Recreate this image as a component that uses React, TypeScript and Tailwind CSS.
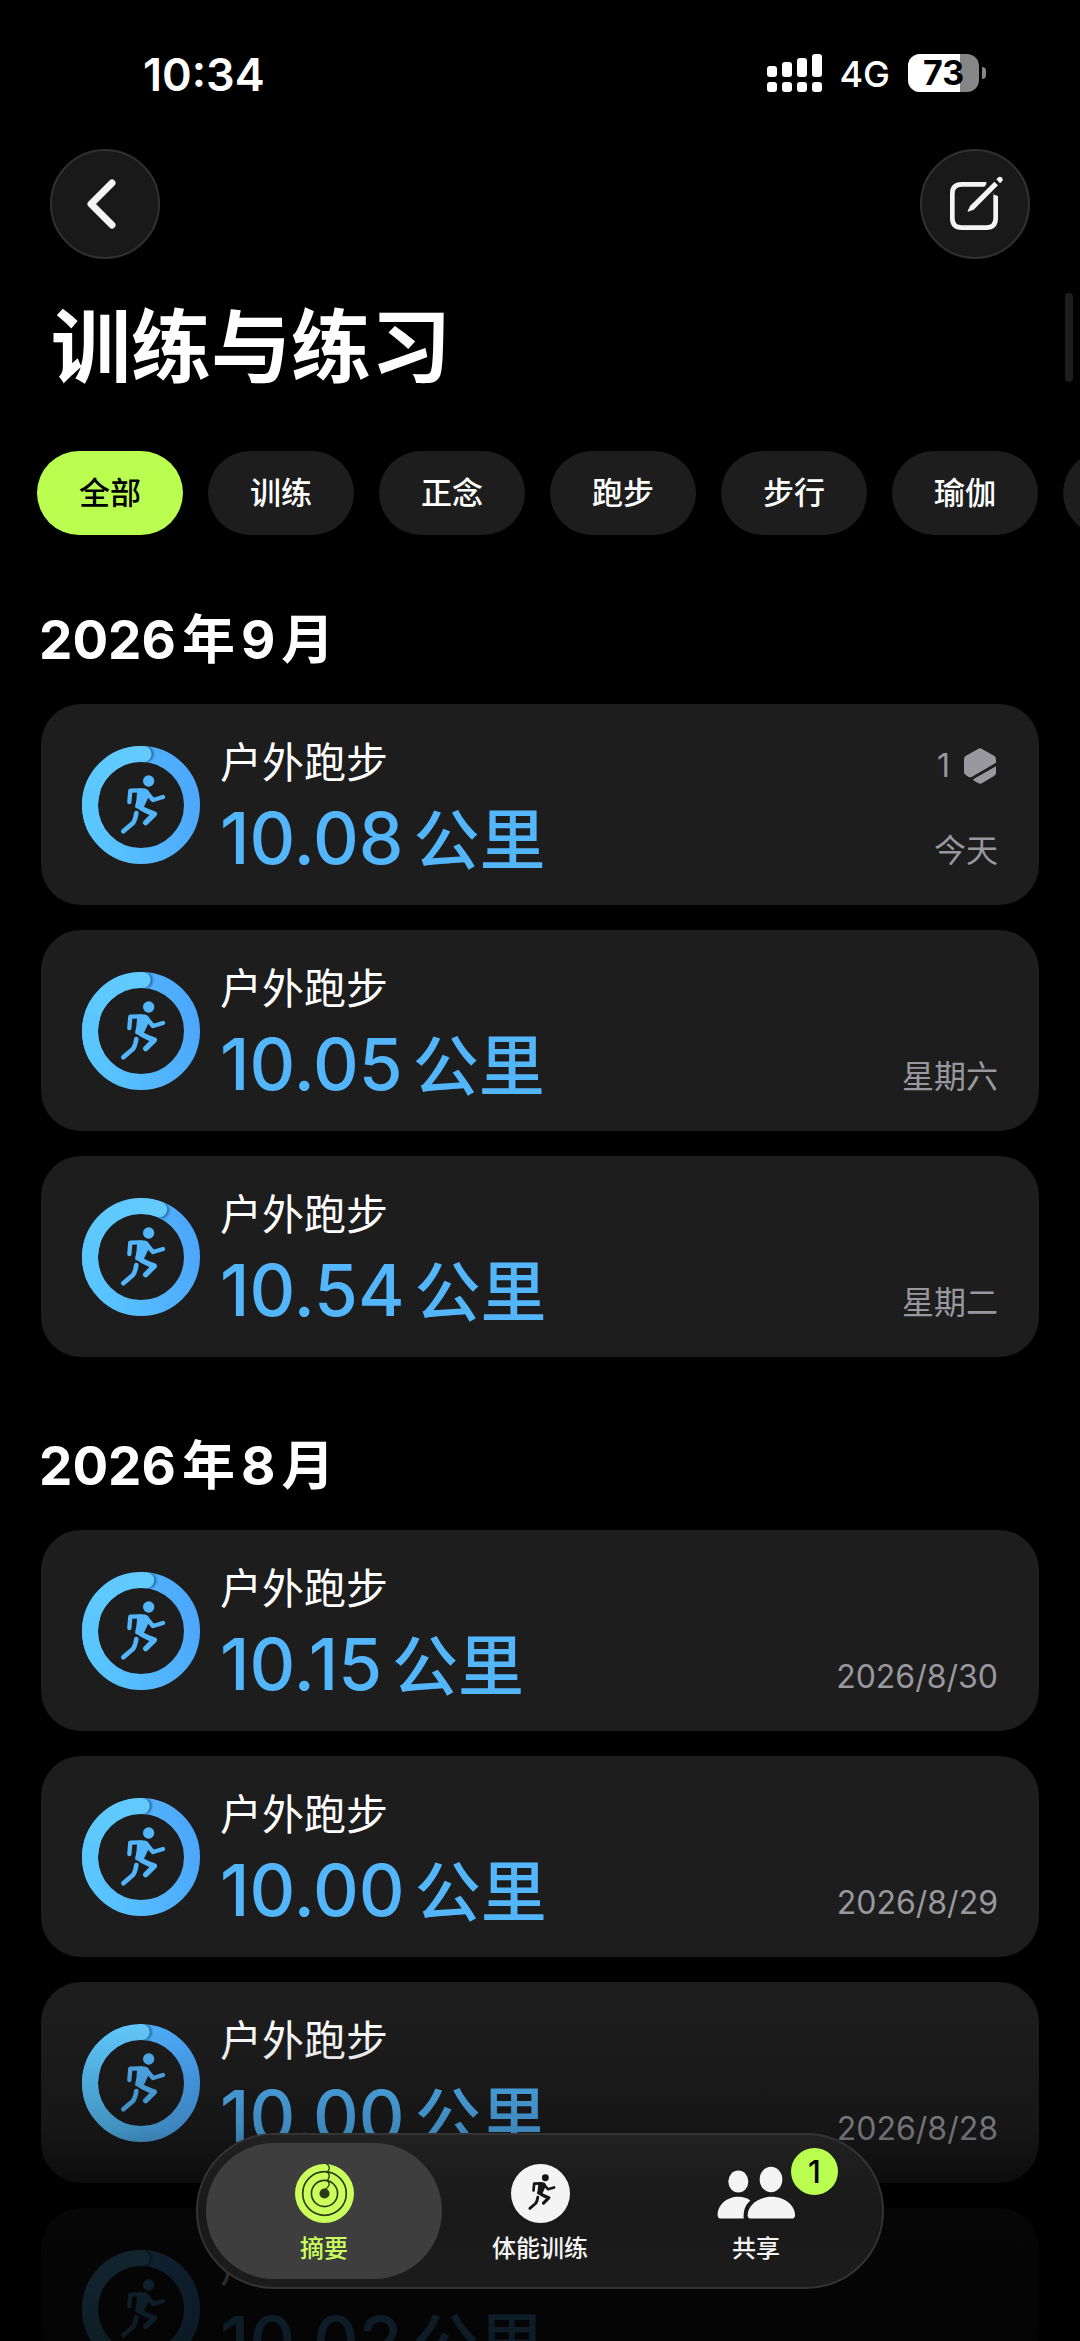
import { useState } from 'react';

type Workout = {
  id: number;
  distance: string;
  date: string;
  lap: number; // degrees past a full circle
  awards?: number;
};

const filters = ['全部', '训练', '正念', '跑步', '步行', '瑜伽', '骑行'];

const months: { year: string; month: string; workouts: Workout[] }[] = [
  {
    year: '2026',
    month: '9',
    workouts: [
      { id: 1, distance: '10.08', date: '今天', lap: 3, awards: 1 },
      { id: 2, distance: '10.05', date: '星期六', lap: 2 },
      { id: 3, distance: '10.54', date: '星期二', lap: 21 },
    ],
  },
  {
    year: '2026',
    month: '8',
    workouts: [
      { id: 4, distance: '10.15', date: '2026/8/30', lap: 6 },
      { id: 5, distance: '10.00', date: '2026/8/29', lap: 1 },
      { id: 6, distance: '10.00', date: '2026/8/28', lap: 1 },
      { id: 7, distance: '10.02', date: '2026/8/27', lap: 1 },
    ],
  },
];

function Runner() {
  return (
    <g stroke="currentColor" fill="none" strokeLinecap="round" strokeLinejoin="round">
      <circle cx="200" cy="105" r="17" fill="currentColor" stroke="none" />
      <path d="M142 168 L145 134 L178 133" strokeWidth="13" />
      <path d="M170 132 L188 132 Q200 135 197 148 L184 176 L178 184 L164 182 L168 160 Z" fill="currentColor" strokeWidth="9" />
      <path d="M193 138 L213 162 L243 153" strokeWidth="13" />
      <path d="M169 178 Q174 188 217 204 L191 230" strokeWidth="16" />
      <path d="M163 201 Q160 222 152 232 L124 256" strokeWidth="14" />
    </g>
  );
}

function arcTo(degrees: number) {
  const angle = (degrees * Math.PI) / 180;
  return `M24 177 A153 153 0 0 1 ${177 + 153 * Math.sin(angle)} ${177 - 153 * Math.cos(angle)}`;
}

function WorkoutRing({ id, lap }: { id: number; lap: number }) {
  return (
    <svg viewBox="0 0 354 354" className="size-[118px] shrink-0 text-[#53b5fa]" aria-hidden="true">
      <defs>
        <linearGradient id={`ring-${id}`} gradientUnits="userSpaceOnUse" x1="0" y1="200" x2="354" y2="120">
          <stop offset="0" stopColor="#5ac8ff" />
          <stop offset="1" stopColor="#4ca6fb" />
        </linearGradient>
        <linearGradient id={`lap-${id}`} gradientUnits="userSpaceOnUse" x1="0" y1="177" x2="200" y2="0">
          <stop offset="0" stopColor="#5ac8ff" />
          <stop offset="1" stopColor="#63cafc" />
        </linearGradient>
        <mask id={`band-${id}`} maskUnits="userSpaceOnUse" x="0" y="0" width="354" height="354">
          <circle cx="177" cy="177" r="153" fill="none" stroke="#fff" strokeWidth="48" />
        </mask>
        <filter id={`blur-${id}`} filterUnits="userSpaceOnUse" x="-40" y="-40" width="434" height="434">
          <feGaussianBlur stdDeviation="5" />
        </filter>
      </defs>
      <circle cx="177" cy="177" r="153" fill="none" stroke={`url(#ring-${id})`} strokeWidth="48" />
      <g mask={`url(#band-${id})`}>
        <path d={arcTo(lap + 2)} fill="none" stroke="#0b2f5c" strokeOpacity="0.8" strokeWidth="46" strokeLinecap="round" filter={`url(#blur-${id})`} />
        <path d={arcTo(lap)} fill="none" stroke={`url(#lap-${id})`} strokeWidth="48" strokeLinecap="round" />
      </g>
      {/* the lap arc starts at nine o'clock, so cover its shadowed round start */}
      <path d="M46 257 A153 153 0 0 1 32 130" fill="none" stroke="#5ac6ff" strokeWidth="48" />
      <Runner />
    </svg>
  );
}

function StatusBar() {
  return (
    <div className="flex h-[149px] items-start justify-between pt-[53px] pr-[94px] pl-[143px]">
      <time className="text-[45px] leading-[43px] font-semibold">10:34</time>
      <div className="flex h-10 items-center">
        <svg viewBox="0 0 55 38" className="h-[38px] w-[55px] fill-white" aria-hidden="true">
          <rect x="0" y="12" width="10" height="11" rx="3" />
          <rect x="15" y="8" width="10" height="15" rx="3" />
          <rect x="30" y="4" width="10" height="19" rx="3" />
          <rect x="45" y="0" width="10" height="23" rx="3" />
          <rect x="0" y="28" width="10" height="10" rx="3" />
          <rect x="15" y="28" width="10" height="10" rx="3" />
          <rect x="30" y="28" width="10" height="10" rx="3" />
          <rect x="45" y="28" width="10" height="10" rx="3" />
        </svg>
        <span className="mr-[18px] ml-[17px] pt-0.5 text-[36px] leading-10 font-medium">4G</span>
        <div className="grid h-[38px] w-[71px] overflow-hidden rounded-xl bg-[#868686]">
          <div className="col-start-1 row-start-1 bg-white" style={{ width: '73%' }} />
          <span className="col-start-1 row-start-1 text-center text-[34px] leading-[38px] font-bold text-black">73</span>
        </div>
        <div className="ml-[3px] h-3 w-1 rounded-r-full bg-[#868686]" />
      </div>
    </div>
  );
}

function Header() {
  const round =
    'flex size-[110px] items-center justify-center rounded-full border-2 border-[#303030] bg-[#191919] text-[#f4f4f4]';
  return (
    <header>
      <div className="flex justify-between px-[50px]">
        <button type="button" aria-label="返回" className={round}>
          <svg viewBox="0 0 110 110" className="size-[110px] shrink-0" fill="none" stroke="currentColor" aria-hidden="true">
            <path d="M62 34 L41 55 L62 76" strokeWidth="7" strokeLinecap="round" strokeLinejoin="round" />
          </svg>
        </button>
        <button type="button" aria-label="编辑" className={round}>
          <svg viewBox="0 0 330 330" className="size-[110px] shrink-0" fill="none" stroke="currentColor" aria-hidden="true">
            <path
              d="M199 106 H125 Q97 106 97 134 V208 Q97 236 125 236 H199 Q227 236 227 208 V132"
              strokeWidth="14"
            />
            <path d="M192 113 L206 99 H214 L200 113 Z" fill="#191919" stroke="none" />
            <path d="M218 136 L236 118 V142 Z" fill="#191919" stroke="none" />
            <path d="M223 98 L234 109 L161 182 L144 188 Q142 188 143 186 L150 171 Z" fill="currentColor" stroke="none" />
            <path d="M229 91 L236 84 Q241 81 246 86 Q251 92 247 96 L240 103 Z" fill="currentColor" stroke="none" />
          </svg>
        </button>
      </div>
      <h1 className="px-[51px] pt-10 text-[80px] leading-[96px] font-bold">训练与练习</h1>
    </header>
  );
}

function Filters() {
  const [active, setActive] = useState(filters[0]);
  return (
    <div className="mt-14 flex gap-[25px] overflow-hidden pl-[37px]">
      {filters.map((name) => (
        <button
          key={name}
          type="button"
          onClick={() => setActive(name)}
          className={`h-[84px] shrink-0 rounded-full px-[42px] text-[31px] leading-10 font-medium ${
            active === name ? 'bg-[#baff50] text-black' : 'bg-[#1d1d1d] text-white'
          }`}
        >
          {name}
        </button>
      ))}
    </div>
  );
}

function WorkoutCard({ workout }: { workout: Workout }) {
  return (
    <li>
      <a href="#workout" className="flex h-[201px] items-center rounded-[40px] bg-[#1d1d1d] px-[41px]">
        <WorkoutRing id={workout.id} lap={workout.lap} />
        <div className="ml-5 flex flex-1 flex-col pt-1.5">
          <span className="text-[42px] leading-[62px]">户外跑步</span>
          <span className="flex items-baseline gap-2.5 text-[#53b5fa] font-medium leading-[88px]">
            <span className="text-[71px]">{workout.distance}</span>
            <span className="text-[66px]">公里</span>
          </span>
        </div>
        <div className="flex h-full flex-col justify-between pt-10 pb-8 text-right text-[32px] leading-[44px] text-[#98989e]">
          <span className="flex items-center justify-end gap-3.5">
            {workout.awards && (
              <>
                {workout.awards}
                <svg viewBox="0 0 96 108" className="mr-0.5 h-9 w-8 fill-current" aria-label="奖章">
                  <path d="M42 3 Q48 -1 54 3 L90 23 Q96 27 96 34 V44 L23 87 Q18 89 13 86 L6 82 Q0 78 0 72 V34 Q0 27 6 23 Z" />
                  <path d="M96 55 V74 Q96 80 90 84 L55 105 Q48 109 42 105 L30 98 Q25 95 30 92 Z" />
                </svg>
              </>
            )}
          </span>
          <span>{workout.date}</span>
        </div>
      </a>
    </li>
  );
}

function TabBar() {
  const tab = 'flex h-[136px] w-54 flex-col items-center gap-2 pt-[21px] text-[24px] leading-9 font-medium';
  return (
    <nav className="absolute inset-x-0 bottom-[52px] flex justify-center">
      <div className="flex rounded-full border-2 border-[#343434] bg-[#1d1d1d] bg-linear-to-b from-[#212121] via-[#191919] to-[#1c1c1c] px-[18px] py-2">
        <a href="#summary" className="-mx-2.5 flex justify-center rounded-full bg-[#3e3e3e] px-2.5 text-[#cbff5c]">
          <span className={tab}>
            <svg viewBox="0 0 176 176" className="size-[59px] shrink-0" fill="none" aria-hidden="true">
              <circle cx="88" cy="88" r="88" fill="currentColor" />
              <circle cx="88" cy="88" r="65" stroke="#2c3a18" strokeWidth="5" />
              <circle cx="88" cy="88" r="39" stroke="#2c3a18" strokeWidth="5" />
              <circle cx="88" cy="88" r="15" fill="#2c3a18" />
              <path d="M94 0 Q104 6 102 14 Q100 20 96 24 Q104 31 102 39 Q100 45 96 49 Q104 56 101 64 Q98 70 90 76" stroke="#2c3a18" strokeWidth="4" />
            </svg>
            摘要
          </span>
        </a>
        <a href="#fitness" className={`${tab} text-[#f5f5f5]`}>
          <svg viewBox="0 0 354 354" className="size-[59px] shrink-0 rounded-full bg-[#f4f4f4] text-[#151515]" aria-hidden="true">
            <g transform="translate(-38 -46) scale(1.22)">
              <Runner />
            </g>
          </svg>
          体能训练
        </a>
        <a href="#sharing" className={`${tab} relative text-[#f5f5f5]`}>
          <svg viewBox="0 0 234 176" className="h-[59px] w-[78px] shrink-0 fill-[#f4f4f4]" aria-hidden="true">
            <ellipse cx="64" cy="52" rx="30" ry="33" />
            <path d="M12 163 Q2 163 2 153 C2 122 30 98 64 98 Q86 98 100 109 C85 122 79 138 80 163 Z" />
            <ellipse cx="162" cy="46" rx="34" ry="38" />
            <path d="M102 163 Q92 163 92 153 C92 124 124 98 163 98 C203 98 234 124 234 153 Q234 163 224 163 Z" />
          </svg>
          共享
          <span className="absolute top-[5px] right-[26px] size-[47px] rounded-full bg-[#baff50] text-center text-[31px] leading-[47px] font-medium text-black">
            1
          </span>
        </a>
      </div>
    </nav>
  );
}

export default function App() {
  return (
    <div className="relative h-screen overflow-hidden bg-black font-['Inter','Noto_Sans_CJK_SC',sans-serif] text-white">
      <StatusBar />
      <Header />
      <Filters />
      <main>
        {months.map(({ year, month, workouts }) => (
          <section key={month} className="px-[41px] pt-[70px] pb-1">
            <h2 className="-mx-0.5 flex gap-1.5 text-[53px] leading-[70px] font-bold">
              <span>{year}</span>
              <span>年</span>
              <span>{month}</span>
              <span>月</span>
            </h2>
            <ul className="mt-[29px] flex flex-col gap-[25px]">
              {workouts.map((workout) => (
                <WorkoutCard key={workout.id} workout={workout} />
              ))}
            </ul>
          </section>
        ))}
      </main>
      {/* scroll indicator */}
      <div className="absolute top-[293px] right-[7px] h-[89px] w-2 rounded-full bg-[#1e1e1e]" />
      {/* content fades out behind the tab bar */}
      <div className="pointer-events-none absolute inset-x-0 bottom-0 h-[341px] bg-[linear-gradient(to_bottom,transparent_5%,rgba(0,0,0,0.25)_38%,rgba(0,0,0,0.5)_50%,rgba(0,0,0,0.8)_62%,rgba(0,0,0,0.85))]" />
      <TabBar />
    </div>
  );
}
